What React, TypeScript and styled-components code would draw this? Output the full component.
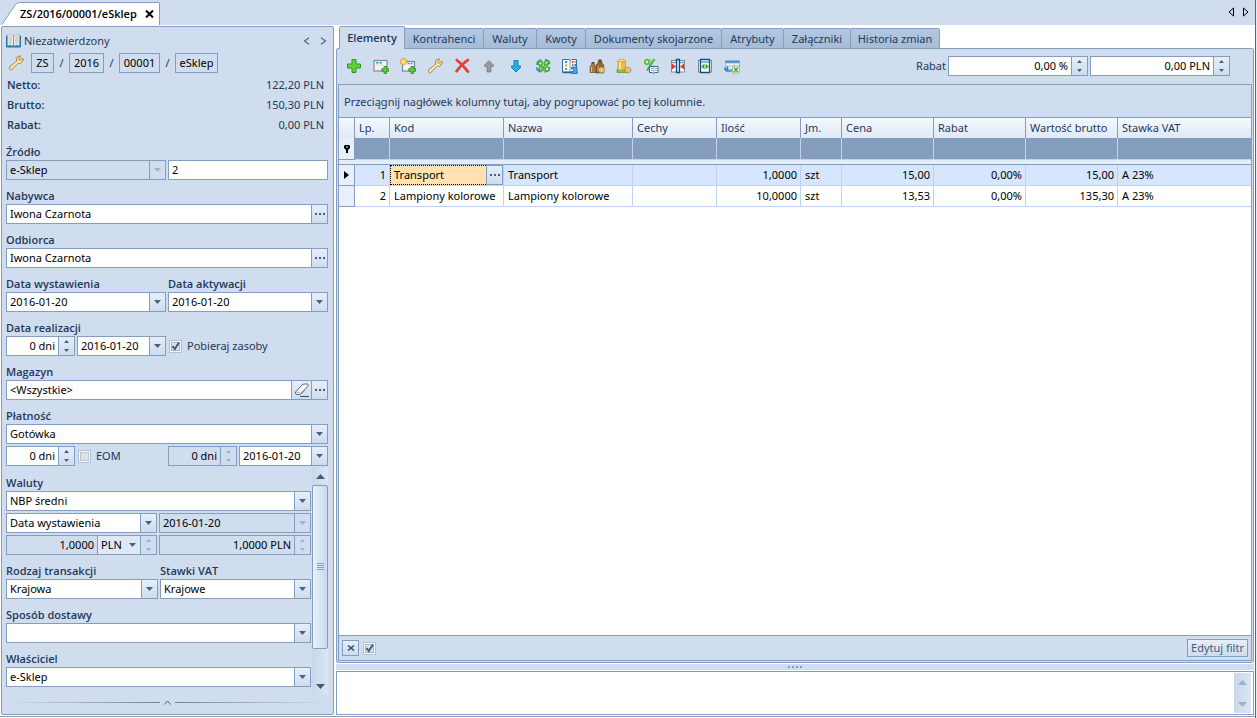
import React from "react";
import styled, { createGlobalStyle, css } from "styled-components";

const color = {
  face: "#d0ddee",
  line: "#859ebf",
  ink: "#1e395b",
  filter: "#849dbd",
  cell: "#bdd3f0",
  arrow: "#4a5f85",
  faded: "#9fb0ca",
};

const buttonFace = css`
  background: linear-gradient(#e6effa, #cddcee);
`;

const GlobalStyle = createGlobalStyle`
  *, *::before, *::after { box-sizing: border-box; }
  body { margin: 0; background: #e3ecf7; }
  body, button, input, select, textarea, table {
    font-family: "Noto Sans", "Open Sans", sans-serif;
    font-size: 11px;
    line-height: 16px;
    color: ${color.ink};
  }
  button { padding: 0; border: 0; background: none; cursor: pointer; }
  svg { display: block; flex: none; }
`;

const Window = styled.div`
  display: flex;
  flex-direction: column;
  height: 100vh;
  min-height: 700px;
  margin-right: 1px;
  border-right: 1px solid #566784;
  background: #fff;
  overflow: hidden;
`;

/* ---------- document strip ---------- */

const DocStrip = styled.header`
  display: flex;
  justify-content: space-between;
  height: 25px;
  padding: 2px 6px 0 2px;
  background: ${color.face};
  flex: none;
`;

const DocTab = styled.div`
  display: flex;
`;

const DocTabFace = styled.div`
  display: flex;
  align-items: center;
  gap: 8px;
  padding-right: 5px;
  background: #fff;
  border: solid ${color.line};
  border-width: 1px 1px 0 0;
  border-radius: 0 2px 0 0;
`;

const DocTitle = styled.h1`
  margin: 0;
  font: 600 11px/16px "Open Sans", "Noto Sans", sans-serif;
  color: #000;
  white-space: nowrap;
`;

const DocNav = styled.nav`
  display: flex;
  align-items: center;
  gap: 9px;
  padding-bottom: 4px;
`;

const Main = styled.main`
  display: flex;
  flex: 1;
  min-height: 0;
  gap: 2px;
  padding: 0 1px 1px;
  border-bottom: 1px solid ${color.line};
  margin-bottom: 1px;
`;

/* ---------- left form ---------- */

const SidePanel = styled.form`
  display: flex;
  flex-direction: column;
  width: 333px;
  flex: none;
  margin-top: 1px;
  padding: 4px 5px 0 4px;
  border: 1px solid ${color.line};
  border-radius: 2px;
  background: ${color.face};
`;

const StatusRow = styled.div`
  display: flex;
  align-items: center;
  gap: 3px;
  height: 20px;
  flex: none;
`;

const StatusNav = styled.div`
  display: flex;
  gap: 10px;
  margin-left: auto;
  padding-right: 1px;
`;

const NumberRow = styled.div`
  display: flex;
  align-items: center;
  height: 20px;
  margin: 2px 0;
  flex: none;
`;

const WrenchButton = styled.button`
  width: 25px;
  padding-left: 2px;
`;

const NumberPart = styled.button<{ $w: number }>`
  width: ${(p) => p.$w}px;
  height: 20px;
  border: 1px solid ${color.line};
  color: #000;
`;

const Slash = styled.span`
  width: 15px;
  text-align: center;
`;

const Totals = styled.dl`
  display: grid;
  grid-template-columns: 1fr auto;
  margin: 0;
  padding: 0 4px 1px 1px;
  line-height: 20px;
  flex: none;
`;

const boldText = css`
  font-family: "Open Sans", "Noto Sans", sans-serif;
  font-weight: 600;
`;

const TotalName = styled.dt`
  ${boldText}
`;

const TotalValue = styled.dd`
  margin: 0;
  text-align: right;
`;

const Columns = styled.div<{ $cols?: string }>`
  display: grid;
  grid-template-columns: ${(p) => p.$cols ?? "1fr 1fr"};
  column-gap: 2px;
  align-items: end;
  flex: none;
`;

const GroupBox = styled.div`
  min-width: 0;
  padding-top: 8px;
`;

const Caption = styled.label`
  display: block;
  height: 16px;
  white-space: nowrap;
  ${boldText}
`;

const Spaced = styled.div`
  margin-top: 2px;
`;

const FieldFrame = styled.div<{ $off?: boolean }>`
  display: flex;
  min-width: 0;
  height: 20px;
  border: 1px solid ${color.line};
  background: ${(p) => (p.$off ? "transparent" : "#fff")};
`;

const fieldText = css`
  width: 100%;
  min-width: 0;
  height: 18px;
  border: 0;
  outline: 0;
  background: none;
  color: #000;
  opacity: 1;
  line-height: 18px;
`;

const TextBox = styled.input<{ $right?: boolean }>`
  ${fieldText}
  flex: 1;
  padding: 0 3px;
  text-align: ${(p) => (p.$right ? "right" : "left")};
`;

const SelectArea = styled.div`
  display: grid;
  grid-template-columns: 1fr 16px;
  flex: 1;
  min-width: 0;
`;

const SelectBox = styled.select`
  ${fieldText}
  grid-area: 1 / 1 / 2 / 3;
  padding: 0 18px 0 3px;
  appearance: none;
`;

const SelectArrow = styled.span<{ $off?: boolean; $flat?: boolean }>`
  grid-area: 1 / 2;
  display: flex;
  align-items: center;
  justify-content: center;
  border-left: 1px solid ${(p) => (p.$flat ? "transparent" : color.line)};
  pointer-events: none;
  ${(p) => !p.$off && !p.$flat && buttonFace}
`;

const SideButton = styled.button<{ $w?: number }>`
  display: flex;
  align-items: center;
  justify-content: center;
  width: ${(p) => p.$w ?? 16}px;
  flex: none;
  border-left: 1px solid ${color.line};
  ${(p) => !p.disabled && buttonFace}
`;

const SpinPair = styled.div<{ $off?: boolean }>`
  display: grid;
  grid-template-rows: 1fr 1fr;
  width: 16px;
  flex: none;
  border-left: 1px solid ${color.line};
  ${(p) => !p.$off && buttonFace}
`;

const SpinButton = styled.button`
  display: flex;
  align-items: center;
  justify-content: center;
`;

const CheckLabel = styled.label`
  display: flex;
  align-items: center;
  gap: 5px;
  height: 20px;
  padding: 0 1px;
  white-space: nowrap;
`;

const CheckHolder = styled.span`
  display: grid;
  width: 13px;
  height: 13px;
  & > * {
    grid-area: 1 / 1;
  }
  & > svg {
    pointer-events: none;
  }
`;

const CheckInput = styled.input`
  appearance: none;
  width: 13px;
  height: 13px;
  margin: 0;
  border: 1px solid #a9c3e6;
  background: #f6f8fb;
`;

const ScrollArea = styled.div`
  display: flex;
  flex: none;
  gap: 1px;
  margin-top: 1px;
`;

const ScrollContent = styled.div`
  flex: 1;
  min-width: 0;
  padding-bottom: 8px;
`;

const Track = styled.div`
  display: flex;
  flex-direction: column;
  width: 16px;
  background: linear-gradient(90deg, #c8d8ea, #dbe6f3);
`;

const TrackButton = styled.button`
  display: flex;
  align-items: center;
  justify-content: center;
  height: 18px;
  width: 100%;
  flex: none;
`;

const Thumb = styled.div`
  display: flex;
  align-items: center;
  justify-content: center;
  flex: 1;
  margin-bottom: 28px;
  border: 1px solid ${color.line};
  border-radius: 2px;
  background: linear-gradient(90deg, #e9f1fa, #c9d8eb);
`;

const CollapseBar = styled.button`
  display: flex;
  align-items: center;
  gap: 4px;
  height: 15px;
  flex: none;
`;

const FadeLine = styled.span<{ $end?: boolean }>`
  flex: 1;
  height: 1px;
  background: linear-gradient(${(p) => (p.$end ? "270deg" : "90deg")}, ${color.face}, #7c828c);
`;

/* ---------- right side ---------- */

const Workspace = styled.section`
  display: flex;
  flex-direction: column;
  flex: 1;
  min-width: 0;
`;

const TabRow = styled.div`
  display: flex;
  align-items: flex-end;
  height: 24px;
  padding-left: 3px;
  flex: none;
`;

const Tab = styled.button<{ $on?: boolean; $w: number }>`
  position: relative;
  width: ${(p) => p.$w}px;
  height: ${(p) => (p.$on ? 23 : 21)}px;
  margin-right: -1px;
  border: 1px solid ${color.line};
  border-bottom-color: ${(p) => (p.$on ? color.face : color.line)};
  border-radius: 2px 2px 0 0;
  background: ${(p) => (p.$on ? color.face : "linear-gradient(#b3c8e0, #a5bcd8)")};
  white-space: nowrap;
  ${(p) => p.$on && boldText}
`;

const Body = styled.div`
  display: flex;
  flex-direction: column;
  flex: 1;
  min-height: 0;
  margin-top: -1px;
  padding: 0 1px 1px;
  border: 1px solid ${color.line};
  border-radius: 2px;
  background: ${color.face};
`;

const Toolbar = styled.div`
  display: flex;
  align-items: center;
  height: 35px;
  padding: 0 22px 1px 2px;
  flex: none;
`;

const ToolButton = styled.button`
  display: flex;
  align-items: center;
  justify-content: center;
  width: 27px;
  height: 24px;
`;

const Discount = styled.div`
  display: flex;
  align-items: center;
  gap: 2px;
  margin-left: auto;
`;

const SpinSlot = styled.div`
  width: 140px;
`;

const GridFrame = styled.div`
  display: flex;
  flex-direction: column;
  flex: 1;
  min-height: 0;
  border: 1px solid ${color.line};
  background: #fff;
`;

const GroupHint = styled.p`
  margin: 0;
  padding: 2px 5px 0;
  line-height: 30px;
  background: ${color.face};
`;

const GridTable = styled.table`
  width: 100%;
  table-layout: fixed;
  border-spacing: 0;
`;

const Col = styled.col<{ $w?: number }>`
  width: ${(p) => (p.$w ? `${p.$w}px` : "auto")};
`;

const HeadCell = styled.th`
  height: 21px;
  padding: 0 4px;
  border: solid ${color.line};
  border-width: 1px 1px 0 0;
  background: linear-gradient(#f3f8fd, #dfeaf7);
  font-weight: 400;
  text-align: left;
  white-space: nowrap;
  &:last-child {
    border-right: 0;
  }
`;

const FilterCell = styled.td`
  height: 22px;
  padding: 0;
  border: solid ${color.cell};
  border-width: 0 1px 1px 0;
  background: ${color.filter};
  &:last-child {
    border-right: 0;
  }
`;

const GapCell = styled.td`
  height: 5px;
  padding: 0;
  border-bottom: 1px solid ${color.line};
  background: #e4eefa;
`;

const MarkCell = styled.td`
  height: 21px;
  padding: 0 0 0 5px;
  border: solid ${color.line};
  border-width: 0 1px 1px 0;
  background: #e6effa;
`;

const DataCell = styled.td<{ $right?: boolean; $on?: boolean; $flush?: boolean }>`
  height: 21px;
  padding: ${(p) => (p.$flush ? "0" : "0 3px 0 4px")};
  border: solid ${color.cell};
  border-width: 0 1px 1px 0;
  background: ${(p) => (p.$on ? "#d5e6fe" : "#fff")};
  color: #000;
  text-align: ${(p) => (p.$right ? "right" : "left")};
  white-space: nowrap;
  &:last-child {
    border-right: 0;
  }
`;

const CellEditor = styled.div`
  display: flex;
  height: 20px;
`;

const CellInput = styled.input`
  flex: 1;
  min-width: 0;
  padding: 0 3px;
  border: 1px dotted #000;
  border-right: 0;
  outline: 0;
  background: #ffe2b0;
  color: #000;
`;

const CellButton = styled.button`
  display: flex;
  align-items: center;
  justify-content: center;
  width: 17px;
  border: 1px solid ${color.line};
  ${buttonFace}
`;

const GridFooter = styled.div`
  display: flex;
  align-items: center;
  gap: 3px;
  height: 25px;
  margin-top: auto;
  padding: 0 3px;
  border-top: 1px solid ${color.line};
  background: ${color.face};
`;

const FooterButton = styled.button<{ $w: number; $h: number }>`
  display: flex;
  align-items: center;
  justify-content: center;
  width: ${(p) => p.$w}px;
  height: ${(p) => p.$h}px;
  border: 1px solid ${color.line};
  color: #47597c;
  white-space: nowrap;
  ${buttonFace}
`;

const Push = styled.div`
  margin-left: auto;
`;

const Splitter = styled.div`
  display: flex;
  align-items: center;
  justify-content: center;
  height: 6px;
  margin: 1px 0;
  flex: none;
  background: ${color.face};
`;

const MemoFrame = styled.div`
  display: flex;
  height: 44px;
  padding: 1px 2px 1px 1px;
  border: 1px solid ${color.line};
  flex: none;
`;

const Memo = styled.textarea`
  flex: 1;
  padding: 2px;
  border: 0;
  outline: 0;
  resize: none;
  overflow: hidden;
  color: #000;
`;

const MemoTrack = styled(Track)`
  width: 17px;
  justify-content: space-between;
`;

/* ---------- glyphs ---------- */

const Down = ({ off }: { off?: boolean }) => (
  <svg width="7" height="4" viewBox="0 0 7 4">
    <path d="M0 0h7L3.5 4z" fill={off ? color.faded : color.arrow} />
  </svg>
);

const Tiny = ({ up, off }: { up?: boolean; off?: boolean }) => (
  <svg width="5" height="3" viewBox="0 0 5 3">
    <path d={up ? "M0 3h5L2.5 0z" : "M0 0h5L2.5 3z"} fill={off ? color.faded : color.arrow} />
  </svg>
);

const Dots = () => (
  <svg width="10" height="2" viewBox="0 0 10 2" fill="#4a5c80">
    <path d="M0 0h2v2H0zM4 0h2v2H4zM8 0h2v2H8z" />
  </svg>
);

const BigArrow = ({ up, off }: { up?: boolean; off?: boolean }) => (
  <svg width="9" height="5" viewBox="0 0 9 5">
    <path d={up ? "M0 5h9L4.5 0z" : "M0 0h9L4.5 5z"} fill={off ? color.faded : "#45587f"} />
  </svg>
);

const Chevron = ({ right }: { right?: boolean }) => (
  <svg width="7" height="8" viewBox="0 0 7 8" fill="none" stroke="#5c6678" strokeWidth="1.200">
    <path d={right ? "M1 .7L5.500 4L1 7.300" : "M6 .7L1.500 4L6 7.300"} />
  </svg>
);

const Wrench = () => (
  <svg width="16" height="16" viewBox="0 0 16 16">
    <path
      d="M9.800 1.200L8.300 3.400L8.700 6.200L1.500 11.800Q.6 14 2.600 14.900Q4 15 4.800 13.800L9.800 8.300L12.800 8.300L15.400 5.500L14.900 3L12.400 5.200L10.700 3.900L12.900 1z"
      fill="#fbd182"
      stroke="#a98146"
      strokeWidth=".9"
    />
    <path d="M2.800 13L9.500 7L12.600 6.800" fill="none" stroke="#fff0c4" strokeWidth="1.200" />
  </svg>
);

const Book = () => (
  <svg width="15" height="14" viewBox="0 0 15 14">
    <path d="M.5 2h14v11H.5z" fill="#2b86c0" stroke="#2476ad" />
    <path d="M1.500 1Q5 0 7.500 1.500Q10 0 13.500 1v10.500Q10 10.500 7.500 12Q5 10.500 1.500 11.500z" fill="#f1f0ec" stroke="#9b9b98" strokeWidth=".6" />
    <path d="M7.500 1.500v10.500" stroke="#8a8a88" />
    <path d="M2.500 3h3.500M2.500 5h3.500M2.500 7h3.500M2.500 9h3.500M9 3h3.500M9 5h3.500M9 7h3.500M9 9h3.500" stroke="#b6b7b6" />
  </svg>
);

const MiniPlus = ({ x, y }: { x: number; y: number }) => (
  <path
    transform={`translate(${x} ${y})`}
    d="M2.500.5h2.500v2.200h2.200v2.500h-2.200v2.200h-2.500v-2.200h-2.200v-2.500h2.200z"
    fill="#5fd03c"
    stroke="#23872a"
    strokeWidth=".8"
  />
);

const Gear = ({ x, y }: { x: number; y: number }) => (
  <g transform={`translate(${x} ${y})`}>
    <circle cx="3.500" cy="3.500" r="2.800" fill="#f4cf85" stroke="#b98b42" strokeWidth="1.200" strokeDasharray="1.500 .7" />
    <circle cx="3.500" cy="3.500" r="1.100" fill="#fff" stroke="#a97c34" strokeWidth=".5" />
  </g>
);

const art: Record<string, React.ReactNode> = {
  add: <path d="M6 1.500h4v4.500h4.500v4H10v4.500H6V10H1.500V6H6z" fill="#62d236" stroke="#2b9331" />,
  form: (
    <>
      <rect x="1" y="2.500" width="13" height="10.500" fill="#f4f4f4" stroke="#85878a" strokeWidth="1.200" />
      <path d="M3 4.700h2.500M6.500 4.700h2.500" stroke="#219be0" strokeWidth="1.400" />
      <path d="M3 7h8" stroke="#dcdcdc" />
      <MiniPlus x={8.500} y={8} />
    </>
  ),
  formNew: (
    <>
      <rect x="2.500" y="3.500" width="12" height="9.500" fill="#f4f4f4" stroke="#85878a" strokeWidth="1.200" />
      <path d="M7.500 5.500h2M10.500 5.500h2" stroke="#219be0" strokeWidth="1.400" />
      <circle cx="3.500" cy="3.500" r="3" fill="#ffd76a" stroke="#cf932a" strokeWidth="1.400" strokeDasharray="1.400 .9" />
      <circle cx="3.500" cy="3.500" r="1.500" fill="#ffe48c" />
      <MiniPlus x={8.500} y={8} />
    </>
  ),
  remove: (
    <>
      <path d="M2 1.500Q9 6.500 14.500 14.500M14.500 1.500Q7 6.500 2 14" fill="none" stroke="#c92a1e" strokeWidth="2.400" />
      <path d="M2 1.500Q9 6.500 14.500 14.500M14.500 1.500Q7 6.500 2 14" fill="none" stroke="#f5422f" strokeWidth="1.600" />
    </>
  ),
  up: <path d="M8 2.500L12.500 7v1.500H10v5.500H6V8.500H3.500V7z" fill="#989898" stroke="#808080" strokeWidth=".8" />,
  down: <path d="M8 14L12.500 9.500V8H10V2.500H6V8H3.500v1.500z" fill="#1fb3ec" stroke="#1673ae" strokeWidth=".9" />,
  cycle: (
    <>
      <path d="M2 7Q2 2.500 6.500 2.500M14.500 9Q14 13.500 9.500 13.800M1.500 9.500Q2.500 13.500 6.500 13.500M10 2Q14.500 2.500 14.500 6" fill="none" stroke="#278ec6" strokeWidth="1.800" />
      <g fill="#e4f6da" stroke="#4fb23c" strokeWidth="1.700">
        <circle cx="5.500" cy="5.300" r="2" />
        <circle cx="11.500" cy="5" r="2" />
        <circle cx="6.500" cy="10.500" r="2.200" />
        <circle cx="12" cy="11" r="2" />
      </g>
      <path d="M13 5L6 11" stroke="#4fb23c" strokeWidth="1.400" />
    </>
  ),
  catalog: (
    <>
      <path d="M.5 1.500H7l1.500 1l1.500-1h4.500v12.500H.5z" fill="#fff" stroke="#2573b4" />
      <path d="M.5 14.500h15" stroke="#1f66a6" strokeWidth="1.500" />
      <path d="M8 2v11.500" stroke="#909498" />
      <path d="M3 4h2M10 7h1.500" stroke="#239be0" strokeWidth="2" />
      <path d="M3 7.500h2M12.500 4h1.500" stroke="#f39b22" strokeWidth="2" />
      <path d="M3 11h2" stroke="#56b93b" strokeWidth="2" />
      <path d="M10 4h1.500M12.500 7h1.500" stroke="#e13c35" strokeWidth="2" />
      <path d="M9.500 9H15v6.500H9.500v-2h2.200v-2.500H9.500z" fill="#4aa8e0" stroke="#1769a5" strokeWidth=".8" />
    </>
  ),
  weights: (
    <>
      <path d="M9 3.500h4v2l1.800 1.500v8H7V7l2-1.500z" fill="#8d6535" stroke="#5d4020" strokeWidth=".6" />
      <path d="M9.500 1.500h3v2h-3z" fill="#5d4020" />
      <path d="M2.500 5.500h3v2l1.500 1v6H1v-6l1.500-1z" fill="#a87b45" stroke="#5d4020" strokeWidth=".6" />
      <path d="M2.700 4h2.600v1.500H2.700z" fill="#5d4020" />
      <path d="M2.500 9v5M9 7.500v6" stroke="#dfbd82" />
      <Gear x={9} y={8.500} />
    </>
  ),
  cylinder: (
    <>
      <path d="M1 11.500h11v3H1z" fill="#7ccb48" stroke="#4d972d" strokeWidth=".7" />
      <path d="M2 2.500v9q3.500 1.500 7.500 0v-9z" fill="#f1bc3b" stroke="#b8862a" strokeWidth=".6" />
      <path d="M4 4v7.500" stroke="#ffe69c" strokeWidth="2" />
      <ellipse cx="5.750" cy="2.500" rx="3.750" ry="1.300" fill="#ffe08a" stroke="#b8862a" strokeWidth=".6" />
      <Gear x={8.500} y={8.500} />
    </>
  ),
  percent: (
    <>
      <path d="M11.500 1L4 12.500" stroke="#49ad2e" strokeWidth="2" />
      <circle cx="4" cy="4" r="2.200" fill="#d9efd0" stroke="#5fbd3c" strokeWidth="1.900" />
      <path d="M6 2.500h5" stroke="#86cf5e" strokeWidth="1.400" />
      <path d="M6.500 8.500h8.500v6h-3l-1.200 1l-1.200-1H6.500z" fill="#fff" stroke="#246f9f" />
      <path d="M8 10.500h2M12 10.500h2M8 12.500h2M12 12.500h2" stroke="#94a7b5" />
      <path d="M10.800 9v6" stroke="#777" strokeWidth=".6" />
    </>
  ),
  narrow: (
    <>
      <rect x="1.500" y="2.500" width="13" height="11.500" fill="#fff" stroke="#85898e" />
      <path d="M2 4.500h12" stroke="#6c9cc9" strokeWidth="1.500" />
      <path d="M6.500 1.500h3v13h-3z" fill="#d8ebfa" stroke="#124c87" strokeWidth="1.300" />
      <path d="M2 5.500L6 8.500L2 11.500zM14 5.500L10 8.500L14 11.500z" fill="#e6352a" />
    </>
  ),
  widen: (
    <>
      <rect x="1.500" y="2.500" width="13" height="11.500" fill="#e8eaec" stroke="#85898e" />
      <path d="M3.500 1.500h9v13h-9z" fill="#fff" stroke="#124c87" strokeWidth="1.300" />
      <path d="M4 4h8" stroke="#5b9bd2" strokeWidth="1.500" />
      <path d="M7.500 5.500L4.200 8.500L7.500 11.500zM8.500 5.500L11.800 8.500L8.500 11.500z" fill="#3fa42d" />
    </>
  ),
  exportGrid: (
    <>
      <rect x="1.500" y="2.500" width="14" height="9" fill="#f2f5f9" stroke="#9aabbd" strokeWidth=".8" />
      <path d="M1.500 4h14" stroke="#5795ce" strokeWidth="2.500" />
      <path d="M6 5.500v6M10.500 5.500v6M2 8h13" stroke="#b9c5d2" strokeWidth=".8" />
      <path d="M8 13H3.500V10.500H.5L3 13.500M3.500 10.500V8" fill="none" stroke="#2e91cd" strokeWidth="1.600" />
      <rect x="8.500" y="8" width="7" height="7" fill="#eef7ea" stroke="#7fbb79" strokeWidth=".8" />
      <path d="M10 9.500l4 4.500M14 9.500l-4 4.500" stroke="#4a9a50" strokeWidth="1.300" />
    </>
  ),
};

const Art = ({ name }: { name: string }) =>
  name === "wrench" ? (
    <Wrench />
  ) : (
    <svg width="16" height="16" viewBox="0 0 16 16">
      {art[name]}
    </svg>
  );

const CheckMark = () => (
  <svg width="13" height="13" viewBox="0 0 13 13" fill="none">
    <rect x="2.500" y="2.500" width="8" height="8" fill="#dfe4ea" stroke="#aeb4bd" />
    <path d="M3.500 6L5.800 9L10 2.500" stroke="#3a5c93" strokeWidth="2" />
  </svg>
);

const EmptyMark = () => (
  <svg width="13" height="13" viewBox="0 0 13 13" fill="none">
    <rect x="2.500" y="2.500" width="8" height="8" fill="#dfe2e6" stroke="#c0c4c9" />
  </svg>
);

/* ---------- field controls ---------- */

type FieldProps = { id: string; value: string; off?: boolean; name?: string };

const Choice = ({ id, value, off, name }: FieldProps) => (
  <FieldFrame $off={off}>
    <SelectArea>
      <SelectBox id={id} disabled={off} aria-label={name}>
        <option>{value}</option>
      </SelectBox>
      <SelectArrow $off={off}>
        <Down off={off} />
      </SelectArrow>
    </SelectArea>
  </FieldFrame>
);

const DateField = ({ id, value, off, name }: FieldProps) => (
  <FieldFrame $off={off}>
    <TextBox id={id} defaultValue={value} disabled={off} aria-label={name} />
    <SideButton type="button" aria-label="Kalendarz" disabled={off}>
      <Down off={off} />
    </SideButton>
  </FieldFrame>
);

const Lookup = ({ id, value }: FieldProps) => (
  <FieldFrame>
    <TextBox id={id} defaultValue={value} />
    <SideButton type="button" aria-label="Wybierz">
      <Dots />
    </SideButton>
  </FieldFrame>
);

const Spins = ({ off }: { off?: boolean }) => (
  <SpinPair $off={off}>
    <SpinButton type="button" aria-label="Zwiększ" disabled={off}>
      <Tiny up off={off} />
    </SpinButton>
    <SpinButton type="button" aria-label="Zmniejsz" disabled={off}>
      <Tiny off={off} />
    </SpinButton>
  </SpinPair>
);

const Spinner = ({ id, value, off, name }: FieldProps) => (
  <FieldFrame $off={off}>
    <TextBox id={id} defaultValue={value} disabled={off} aria-label={name} $right />
    <Spins off={off} />
  </FieldFrame>
);

const Group = ({ label, htmlFor, children }: { label: string; htmlFor: string; children: React.ReactNode }) => (
  <GroupBox>
    <Caption htmlFor={htmlFor}>{label}</Caption>
    {children}
  </GroupBox>
);

const Check = ({ label, on, off, name }: { label?: string; on?: boolean; off?: boolean; name?: string }) => (
  <CheckLabel>
    <CheckHolder>
      <CheckInput type="checkbox" defaultChecked={on} disabled={off} aria-label={name} />
      {on ? <CheckMark /> : <EmptyMark />}
    </CheckHolder>
    {label}
  </CheckLabel>
);

const RateSelect = styled(SelectArea)`
  flex: none;
  width: 43px;
  border-left: 1px solid ${color.line};
  background: #dfe9f6;
`;

/* ---------- page ---------- */

const totals = [
  ["Netto:", "122,20 PLN"],
  ["Brutto:", "150,30 PLN"],
  ["Rabat:", "0,00 PLN"],
];

const SideForm = () => (
  <SidePanel onSubmit={(e) => e.preventDefault()}>
    <StatusRow>
      <Book />
      Niezatwierdzony
      <StatusNav>
        <button type="button" aria-label="Poprzedni">
          <Chevron />
        </button>
        <button type="button" aria-label="Następny">
          <Chevron right />
        </button>
      </StatusNav>
    </StatusRow>
    <NumberRow>
      <WrenchButton type="button" aria-label="Numeracja">
        <Wrench />
      </WrenchButton>
      <NumberPart type="button" $w={23}>ZS</NumberPart>
      <Slash>/</Slash>
      <NumberPart type="button" $w={35}>2016</NumberPart>
      <Slash>/</Slash>
      <NumberPart type="button" $w={41}>00001</NumberPart>
      <Slash>/</Slash>
      <NumberPart type="button" $w={43}>eSklep</NumberPart>
    </NumberRow>
    <Totals>
      {totals.map(([name, value]) => (
        <React.Fragment key={name}>
          <TotalName>{name}</TotalName>
          <TotalValue>{value}</TotalValue>
        </React.Fragment>
      ))}
    </Totals>

    <Columns>
      <Group label="Źródło" htmlFor="zrodlo">
        <Choice id="zrodlo" value="e-Sklep" off />
      </Group>
      <FieldFrame>
        <TextBox id="zrodlo-nr" defaultValue="2" aria-label="Numer źródła" />
      </FieldFrame>
    </Columns>
    <Group label="Nabywca" htmlFor="nabywca">
      <Lookup id="nabywca" value="Iwona Czarnota" />
    </Group>
    <Group label="Odbiorca" htmlFor="odbiorca">
      <Lookup id="odbiorca" value="Iwona Czarnota" />
    </Group>
    <Columns>
      <Group label="Data wystawienia" htmlFor="wystawienia">
        <DateField id="wystawienia" value="2016-01-20" />
      </Group>
      <Group label="Data aktywacji" htmlFor="aktywacji">
        <DateField id="aktywacji" value="2016-01-20" />
      </Group>
    </Columns>
    <Columns $cols="69px 89px 1fr">
      <Group label="Data realizacji" htmlFor="realizacji">
        <Spinner id="realizacji" value="0 dni" />
      </Group>
      <DateField id="realizacji-data" value="2016-01-20" name="Data realizacji" />
      <Check label="Pobieraj zasoby" on />
    </Columns>
    <Group label="Magazyn" htmlFor="magazyn">
      <FieldFrame>
        <TextBox id="magazyn" defaultValue="<Wszystkie>" />
        <SideButton type="button" $w={20} aria-label="Wyczyść">
          <svg width="16" height="14" viewBox="0 0 16 14">
            <path d="M1.500 9L8 2Q9 1 10.500 1h3Q15 1.500 14 3L8 10Q7 11.500 5.500 11.500H3Q.5 11 1.500 9z" fill="#f7f7f7" stroke="#5d6573" />
            <path d="M2.500 9.500Q5.500 8.500 6.500 10.500L13.500 3" fill="none" stroke="#a9afba" />
            <path d="M6 13.500h9" stroke="#31517f" />
          </svg>
        </SideButton>
        <SideButton type="button" aria-label="Wybierz">
          <Dots />
        </SideButton>
      </FieldFrame>
    </Group>
    <Group label="Płatność" htmlFor="platnosc">
      <Choice id="platnosc" value="Gotówka" />
    </Group>
    <Spaced>
      <Columns $cols="69px 89px 69px 1fr">
        <Spinner id="termin" value="0 dni" name="Termin" />
        <Check label="EOM" off />
        <Spinner id="dni" value="0 dni" name="Dni" off />
        <DateField id="termin-data" value="2016-01-20" name="Termin płatności" />
      </Columns>
    </Spaced>

    <ScrollArea>
      <ScrollContent>
        <Group label="Waluty" htmlFor="waluty">
          <Choice id="waluty" value="NBP średni" />
        </Group>
        <Spaced>
          <Columns $cols="151px 1fr">
            <Choice id="kurs-z" value="Data wystawienia" name="Kurs z dnia" />
            <DateField id="kurs-data" value="2016-01-20" name="Data kursu" off />
          </Columns>
        </Spaced>
        <Spaced>
          <Columns $cols="151px 1fr">
            <FieldFrame $off>
              <TextBox defaultValue="1,0000" aria-label="Kurs" disabled $right />
              <RateSelect>
                <SelectBox aria-label="Waluta">
                  <option>PLN</option>
                </SelectBox>
                <SelectArrow $flat>
                  <Down />
                </SelectArrow>
              </RateSelect>
              <Spins off />
            </FieldFrame>
            <Spinner id="kurs-pln" value="1,0000 PLN" name="Kurs w PLN" off />
          </Columns>
        </Spaced>
        <Columns $cols="152px 1fr">
          <Group label="Rodzaj transakcji" htmlFor="rodzaj">
            <Choice id="rodzaj" value="Krajowa" />
          </Group>
          <Group label="Stawki VAT" htmlFor="stawki">
            <Choice id="stawki" value="Krajowe" />
          </Group>
        </Columns>
        <Group label="Sposób dostawy" htmlFor="dostawa">
          <Choice id="dostawa" value="" />
        </Group>
        <Group label="Właściciel" htmlFor="wlasciciel">
          <Choice id="wlasciciel" value="e-Sklep" />
        </Group>
      </ScrollContent>
      <Track>
        <TrackButton type="button" aria-label="W górę">
          <BigArrow up />
        </TrackButton>
        <Thumb>
          <svg width="7" height="8" viewBox="0 0 7 8" stroke={color.line}>
            <path d="M0 .5h7M0 2.500h7M0 4.500h7M0 6.500h7" />
          </svg>
        </Thumb>
        <TrackButton type="button" aria-label="W dół">
          <BigArrow />
        </TrackButton>
      </Track>
    </ScrollArea>
    <CollapseBar type="button" aria-label="Zwiń">
      <FadeLine />
      <svg width="7" height="5" viewBox="0 0 7 5" fill="none" stroke="#556070">
        <path d="M.5 4.500L3.500 1L6.500 4.500" />
      </svg>
      <FadeLine $end />
    </CollapseBar>
  </SidePanel>
);

const tabs: [string, number][] = [
  ["Elementy", 66],
  ["Kontrahenci", 80],
  ["Waluty", 54],
  ["Kwoty", 50],
  ["Dokumenty skojarzone", 137],
  ["Atrybuty", 63],
  ["Załączniki", 68],
  ["Historia zmian", 90],
];

const tools: [string, string][] = [
  ["add", "Dodaj"],
  ["form", "Dodaj przez formularz"],
  ["formNew", "Nowy przez formularz"],
  ["wrench", "Edytuj"],
  ["remove", "Usuń"],
  ["up", "W górę"],
  ["down", "W dół"],
  ["cycle", "Przelicz"],
  ["catalog", "Katalog"],
  ["weights", "Wagi"],
  ["cylinder", "Zasoby"],
  ["percent", "Rabaty"],
  ["narrow", "Zwęź kolumny"],
  ["widen", "Rozszerz kolumny"],
  ["exportGrid", "Eksport"],
];

const columns: [string, number?][] = [
  ["Lp.", 35],
  ["Kod", 114],
  ["Nazwa", 129],
  ["Cechy", 84],
  ["Ilość", 84],
  ["Jm.", 41],
  ["Cena", 92],
  ["Rabat", 92],
  ["Wartość brutto", 92],
  ["Stawka VAT"],
];

const rightAligned = [0, 4, 6, 7, 8];

const rows = [
  ["1", "Transport", "Transport", "", "1,0000", "szt", "15,00", "0,00%", "15,00", "A 23%"],
  ["2", "Lampiony kolorowe", "Lampiony kolorowe", "", "10,0000", "szt", "13,53", "0,00%", "135,30", "A 23%"],
];

const Items = () => (
  <GridFrame>
    <GroupHint>Przeciągnij nagłówek kolumny tutaj, aby pogrupować po tej kolumnie.</GroupHint>
    <GridTable>
      <colgroup>
        <Col $w={16} />
        {columns.map(([name, w]) => (
          <Col key={name} $w={w} />
        ))}
      </colgroup>
      <thead>
        <tr>
          <HeadCell />
          {columns.map(([name]) => (
            <HeadCell key={name} scope="col">{name}</HeadCell>
          ))}
        </tr>
      </thead>
      <tbody>
        <tr>
          <MarkCell>
            <svg width="6" height="8" viewBox="0 0 6 8">
              <path d="M1 0h4L6 1v2L4 5v3H2V5L0 3V1z" fill="#000" />
              <path d="M2 2h2" stroke="#fff" />
            </svg>
          </MarkCell>
          {columns.map(([name]) => (
            <FilterCell key={name} />
          ))}
        </tr>
        <tr>
          <GapCell colSpan={columns.length + 1} />
        </tr>
        {rows.map((row, r) => (
          <tr key={row[0]}>
            <MarkCell>
              {r === 0 && (
                <svg width="5" height="8" viewBox="0 0 5 8">
                  <path d="M0 0l5 4l-5 4z" fill="#000" />
                </svg>
              )}
            </MarkCell>
            {row.map((text, c) =>
              r === 0 && c === 1 ? (
                <DataCell key={c} $on $flush>
                  <CellEditor>
                    <CellInput defaultValue={text} aria-label="Kod" />
                    <CellButton type="button" aria-label="Wybierz">
                      <Dots />
                    </CellButton>
                  </CellEditor>
                </DataCell>
              ) : (
                <DataCell key={c} $on={r === 0} $right={rightAligned.includes(c)}>
                  {text}
                </DataCell>
              )
            )}
          </tr>
        ))}
      </tbody>
    </GridTable>
    <GridFooter>
      <FooterButton type="button" $w={17} $h={16} aria-label="Wyczyść filtr">
        <svg width="8" height="6" viewBox="0 0 8 6" stroke="#3d5078" strokeWidth="1.600">
          <path d="M1 .5L7 5.500M7 .5L1 5.500" />
        </svg>
      </FooterButton>
      <Check on name="Filtr aktywny" />
      <Push>
        <FooterButton type="button" $w={61} $h={18}>Edytuj filtr</FooterButton>
      </Push>
    </GridFooter>
  </GridFrame>
);

export default function App() {
  return (
    <>
      <GlobalStyle />
      <Window>
        <DocStrip>
          <DocTab>
            <svg width="18" height="23" viewBox="0 0 18 23">
              <path d="M0 23L13 3Q15 .5 18 .5V23z" fill="#fff" />
              <path d="M0 22.500L13 3Q15 .5 18 .5" fill="none" stroke={color.line} />
            </svg>
            <DocTabFace>
              <DocTitle>ZS/2016/00001/eSklep</DocTitle>
              <button type="button" aria-label="Zamknij">
                <svg width="9" height="8" viewBox="0 0 9 8" stroke="#000" strokeWidth="2">
                  <path d="M1 .5L8 7.500M8 .5L1 7.500" />
                </svg>
              </button>
            </DocTabFace>
          </DocTab>
          <DocNav>
            <button type="button" aria-label="Poprzednia karta">
              <svg width="6" height="10" viewBox="0 0 6 10" fill="none" stroke="#000">
                <path d="M5.500 1v8L1 5z" />
              </svg>
            </button>
            <button type="button" aria-label="Następna karta">
              <svg width="6" height="10" viewBox="0 0 6 10" fill="none" stroke="#000">
                <path d="M.5 1v8L5 5z" />
              </svg>
            </button>
          </DocNav>
        </DocStrip>
        <Main>
          <SideForm />
          <Workspace>
            <TabRow role="tablist">
              {tabs.map(([name, w], i) => (
                <Tab key={name} type="button" role="tab" aria-selected={i === 0} $on={i === 0} $w={w}>
                  {name}
                </Tab>
              ))}
            </TabRow>
            <Body>
              <Toolbar>
                {tools.map(([icon, name]) => (
                  <ToolButton key={icon} type="button" aria-label={name}>
                    <Art name={icon} />
                  </ToolButton>
                ))}
                <Discount>
                  <label htmlFor="rabat">Rabat</label>
                  <SpinSlot>
                    <Spinner id="rabat" value="0,00 %" />
                  </SpinSlot>
                  <SpinSlot>
                    <Spinner id="rabat-pln" value="0,00 PLN" name="Rabat w PLN" />
                  </SpinSlot>
                </Discount>
              </Toolbar>
              <Items />
            </Body>
            <Splitter>
              <svg width="14" height="2" viewBox="0 0 14 2" fill={color.line}>
                <path d="M0 0h2v2H0zM4 0h2v2H4zM8 0h2v2H8zM12 0h2v2h-2z" />
              </svg>
            </Splitter>
            <MemoFrame>
              <Memo aria-label="Opis" />
              <MemoTrack>
                <TrackButton type="button" aria-label="W górę">
                  <BigArrow up off />
                </TrackButton>
                <TrackButton type="button" aria-label="W dół">
                  <BigArrow off />
                </TrackButton>
              </MemoTrack>
            </MemoFrame>
          </Workspace>
        </Main>
      </Window>
    </>
  );
}
